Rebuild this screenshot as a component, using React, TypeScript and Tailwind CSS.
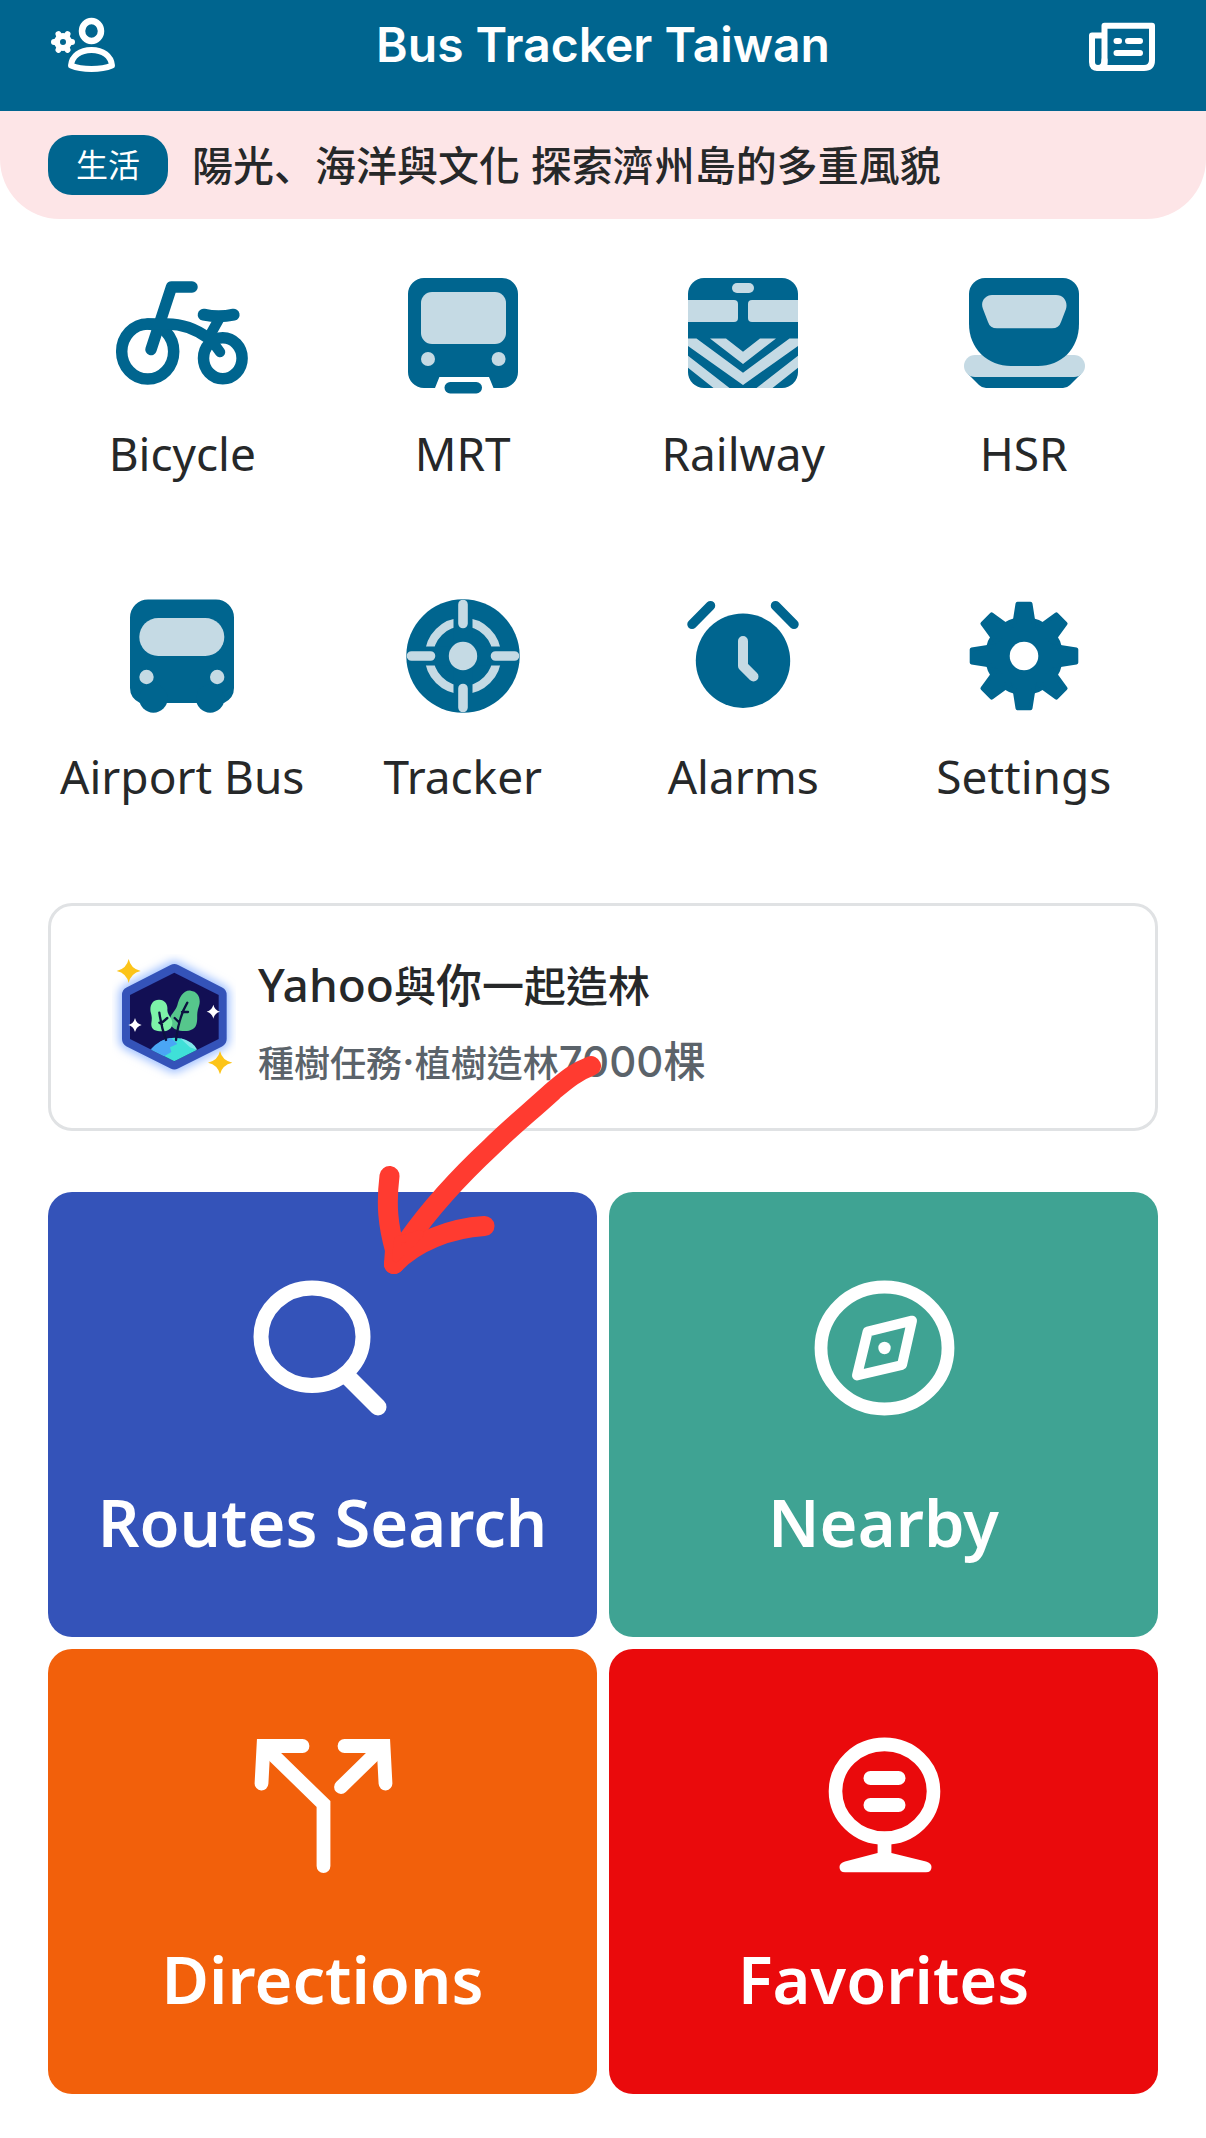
import type { ReactNode } from "react";

const LIGHT = "#c5dae4";

function AccountIcon() {
  return (
    <svg viewBox="48 14 70 62" className="h-[62px] w-[70px]" fill="none" stroke="white" aria-hidden="true">
      <ellipse cx="91.5" cy="31" rx="9.5" ry="10" strokeWidth="6.5" />
      <path
        d="M71 65.5C72 56 80 50 91.5 50S111 56 112 65.5C106 68 99 69 91.5 69S77 68 71 65.5Z"
        strokeWidth="6"
        strokeLinejoin="round"
      />
      <circle cx="63" cy="42" r="6" strokeWidth="6" />
      {[0, 60, 120, 180, 240, 300].map((deg) => (
        <path key={deg} d="M70 42H72" strokeWidth="6" strokeLinecap="round" transform={`rotate(${deg} 63 42)`} />
      ))}
    </svg>
  );
}

function NewsIcon() {
  return (
    <svg
      viewBox="1088 14 70 62"
      className="h-[62px] w-[70px]"
      fill="none"
      stroke="white"
      strokeWidth="6"
      strokeLinecap="round"
      strokeLinejoin="round"
      aria-hidden="true"
    >
      <path d="M1104.500 66V25.700H1152V60Q1152 68 1144 68H1098Q1092 68 1092 62V35.500H1103" />
      <path d="M1104.500 60Q1104.500 68 1098 68" />
      <path d="M1116.500 41H1119M1128 41H1140M1116.500 53H1140" />
    </svg>
  );
}

function ServiceSvg({ children }: { children: ReactNode }) {
  return (
    <svg viewBox="0 0 140 140" className="h-[140px] w-[140px]" fill="#00658f" aria-hidden="true">
      {children}
    </svg>
  );
}

function BicycleIcon() {
  return (
    <ServiceSvg>
      <g fill="none" stroke="#00658f" strokeWidth="11.5" strokeLinecap="round" strokeLinejoin="round">
        <ellipse cx="35.700" cy="88.500" rx="26" ry="27.600" />
        <ellipse cx="110.800" cy="95.200" rx="19.300" ry="20.500" />
        <path d="M80 24H59.500L39 86.500" />
        <path d="M36 61H52Q76 60 96 75" />
        <path d="M107 56L97 74L108 89" strokeWidth="10.500" />
        <path d="M91.700 51.700Q106.600 55 121.600 51.700" strokeWidth="12" />
      </g>
    </ServiceSvg>
  );
}

function MrtIcon() {
  return (
    <ServiceSvg>
      <path d="M31 15H109A16 16 0 0 1 125 31V109A16 16 0 0 1 109 125H100.500L96 114H46.400L42 125H31A16 16 0 0 1 15 109V31A16 16 0 0 1 31 15Z" />
      <rect x="28" y="29" width="85" height="52" rx="11" fill={LIGHT} />
      <circle cx="35" cy="96" r="7" fill={LIGHT} />
      <circle cx="105.600" cy="96" r="7" fill={LIGHT} />
      <rect x="51.500" y="119" width="37.500" height="11.500" rx="5.700" />
    </ServiceSvg>
  );
}

function RailwayIcon() {
  return (
    <ServiceSvg>
      <clipPath id="railway-body">
        <rect x="15" y="15" width="110" height="110" rx="16" />
      </clipPath>
      <g clipPath="url(#railway-body)">
        <rect x="15" y="15" width="110" height="110" />
        <g fill={LIGHT}>
          <rect x="59" y="20" width="22" height="10" rx="5" />
          <rect x="5" y="37" width="60" height="22" rx="4" />
          <rect x="75" y="37" width="60" height="22" rx="4" />
          <path d="M37 75.500H53L70 88.700L87 75.500H103L70 101Z" />
          <path d="M15 75.500H23.500L70 109.700L116.500 75.500H125V83L70 122L15 83Z" />
          <path d="M15 92.700L56.500 125H40.500L15 104.700ZM125 92.700L83.500 125H99.500L125 104.700Z" />
        </g>
      </g>
    </ServiceSvg>
  );
}

function HsrIcon() {
  return (
    <ServiceSvg>
      <path d="M14 111H127L116 122Q113 125 109 125H32Q28 125 25 122Z" />
      <rect x="10" y="92" width="121" height="22" rx="11" fill={LIGHT} />
      <path d="M31 15H109A16 16 0 0 1 125 31V61C125 86 107 103 84 103H57C34 103 15 86 15 61V31A16 16 0 0 1 31 15Z" />
      <path
        d="M38 32H102C110 32 114 39 112 46L107 59Q105 65.300 98 65.300H43Q36 65.300 34 59L29 46C26 39 31 32 38 32Z"
        fill={LIGHT}
      />
    </ServiceSvg>
  );
}

function AirportBusIcon() {
  return (
    <ServiceSvg>
      <path d="M36 13.500H104A18 18 0 0 1 122 31.500V102Q122 112 112 117H28Q18 112 18 102V31.500A18 18 0 0 1 36 13.500Z" />
      <circle cx="41.400" cy="112.500" r="14.200" />
      <circle cx="98.200" cy="112.500" r="14.200" />
      <rect x="27.300" y="32" width="85" height="38" rx="19" fill={LIGHT} />
      <circle cx="34.500" cy="91" r="7.200" fill={LIGHT} />
      <circle cx="105.200" cy="91" r="7.200" fill={LIGHT} />
    </ServiceSvg>
  );
}

function TrackerIcon() {
  return (
    <ServiceSvg>
      <circle cx="70" cy="70" r="56.700" />
      <circle cx="70" cy="70" r="34" fill="none" stroke={LIGHT} strokeWidth="8.500" />
      <path d="M70 30V110M30 70H110" stroke="#00658f" strokeWidth="19" />
      <path
        d="M70 18.500V37.500M70 102.500V121.500M18.500 70H37.500M102.500 70H121.500"
        stroke={LIGHT}
        strokeWidth="9.600"
        strokeLinecap="round"
      />
      <circle cx="70" cy="70" r="14.200" fill={LIGHT} />
    </ServiceSvg>
  );
}

function AlarmIcon() {
  return (
    <ServiceSvg>
      <circle cx="70" cy="74.700" r="47.200" />
      <g fill="none" strokeLinecap="round" strokeLinejoin="round">
        <path d="M19 38.300L37.500 19.700M121 38.300L102.500 19.700" stroke="#00658f" strokeWidth="9.500" />
        <path d="M70 55V80L80.500 90.500" stroke={LIGHT} strokeWidth="10" />
      </g>
    </ServiceSvg>
  );
}

function SettingsIcon() {
  return (
    <ServiceSvg>
      <circle cx="70" cy="70" r="39" />
      {[0, 45, 90, 135, 180, 225, 270, 315].map((deg) => (
        <path
          key={deg}
          d="M63.500 17.700H76.500L80 40H60Z"
          stroke="#00658f"
          strokeWidth="4"
          strokeLinejoin="round"
          transform={`rotate(${deg} 70 70)`}
        />
      ))}
      <circle cx="70" cy="70" r="14.300" fill="white" />
    </ServiceSvg>
  );
}

function TileSvg({ children }: { children: ReactNode }) {
  return (
    <svg
      viewBox="0 0 140 140"
      className="h-[140px] w-[140px] overflow-visible"
      fill="none"
      stroke="white"
      strokeLinecap="round"
      aria-hidden="true"
    >
      {children}
    </svg>
  );
}

function SearchIcon() {
  return (
    <TileSvg>
      <ellipse cx="59" cy="58.700" rx="51" ry="48.800" strokeWidth="15" />
      <path d="M96 100L125 129" strokeWidth="17" />
    </TileSvg>
  );
}

function NearbyIcon() {
  return (
    <TileSvg>
      <ellipse cx="70.500" cy="70" rx="63.500" ry="61" strokeWidth="12.800" />
      <path d="M98 42.700L53.600 53.700L43 97.500L88 87Z" strokeWidth="10" strokeLinejoin="round" />
      <circle cx="70.500" cy="70" r="6.200" fill="white" stroke="none" />
    </TileSvg>
  );
}

function DirectionsIcon() {
  return (
    <TileSvg>
      <g strokeWidth="13.800">
        <path d="M70.500 131V69L12 12" />
        <path d="M49.500 11H10.500L8.500 48.500" />
        <path d="M91.500 11H130.500L132.500 48.500" />
        <path d="M88 52L129 12" />
      </g>
    </TileSvg>
  );
}

function FavoritesIcon() {
  return (
    <TileSvg>
      <ellipse cx="70.500" cy="56.200" rx="49" ry="46.800" strokeWidth="13.600" />
      <g fill="white" stroke="none">
        <rect x="49.500" y="36" width="42" height="14" rx="7" />
        <rect x="49.500" y="63" width="42" height="14" rx="7" />
        <path d="M63.600 106H77.400V118L112 126.500Q117.500 128 117.500 132Q117.500 137.300 112 137.300H31Q25.500 137.300 25.500 132Q25.500 128 31 126.500L63.600 118Z" />
      </g>
    </TileSvg>
  );
}

function TreeBadge() {
  return (
    <svg viewBox="0 0 450 450" className="h-[150px] w-[150px] shrink-0" aria-hidden="true">
      <defs>
        <filter id="badge-glow" x="-20%" y="-20%" width="140%" height="140%">
          <feGaussianBlur stdDeviation="13" />
        </filter>
        <clipPath id="badge-inner">
          <path d="M223 98L356 165V297L223 364L90 297V165Z" />
        </clipPath>
      </defs>
      <path
        d="M223 97L355 165V297L223 363L91 297V165Z"
        fill="#a5c4ff"
        stroke="#a5c4ff"
        strokeWidth="70"
        strokeLinejoin="round"
        filter="url(#badge-glow)"
      />
      <path
        d="M223 97L355 165V297L223 363L91 297V165Z"
        fill="#3453b9"
        stroke="#3453b9"
        strokeWidth="50"
        strokeLinejoin="round"
      />
      <path d="M223 98L356 165V297L223 364L90 297V165Z" fill="#120f54" />
      <g clipPath="url(#badge-inner)">
        <circle cx="223" cy="372" r="79" fill="#3fe0d8" />
        <path d="M150 330Q180 296 214 294L232 312L210 322L214 336L190 350L160 340Z" fill="#4aa6f5" />
        <path d="M240 294Q280 304 292 330L270 322Z" fill="#7ee8ea" />
      </g>
      <path
        d="M272 152C294 154 304 176 297 198C288 222 294 232 290 250C286 272 262 276 240 272C222 270 208 258 210 238C212 222 226 214 232 196C238 172 250 150 272 152Z"
        fill="#56c68c"
      />
      <path
        d="M178 179C196 180 204 194 202 210C202 226 216 232 217 248C217 266 204 274 186 274C166 274 152 268 154 250C156 236 156 230 152 216C148 196 158 178 178 179Z"
        fill="#7df2a8"
      />
      <path
        d="M178 218Q184 262 198 300M188 246L202 234M186 254L178 248M262 188Q236 232 228 300M246 216L264 216M236 246L224 234"
        fill="none"
        stroke="#0c1240"
        strokeWidth="7"
        strokeLinecap="round"
      />
      <path d="M86 57Q92 86 122 93Q92 100 86 129Q80 100 50 93Q80 86 86 57Z" fill="#fcc419" />
      <path d="M360 333Q366 361 397 368Q366 375 360 403Q354 375 324 368Q354 361 360 333Z" fill="#fcc419" />
      <path d="M340 194Q344 211 360 215Q344 219 340 236Q336 219 320 215Q336 211 340 194Z" fill="white" />
      <path d="M105 234Q109 251 125 255Q109 259 105 276Q101 259 85 255Q101 251 105 234Z" fill="white" />
    </svg>
  );
}

// hand-drawn pointer towards the routes search tile
function RedArrow() {
  return (
    <svg
      viewBox="370 1050 240 230"
      className="pointer-events-none absolute left-[370px] top-[147px] h-[230px] w-[240px]"
      fill="none"
      stroke="#ff3b30"
      strokeWidth="20"
      strokeLinecap="round"
      strokeLinejoin="round"
      aria-hidden="true"
    >
      <path d="M591 1066C575 1072 565 1081 553 1091C530 1112 510 1128 491 1147C462 1174 432 1206 408 1240L394 1264" />
      <path d="M389.500 1176C386 1205 388 1225 395 1250L394 1264" />
      <path d="M484.500 1226C450 1228 415 1242 394 1264" />
      <path d="M398 1240L420 1234L396 1258Z" fill="#ff3b30" strokeWidth="8" />
    </svg>
  );
}

const services = [
  { name: "Bicycle", icon: <BicycleIcon /> },
  { name: "MRT", icon: <MrtIcon /> },
  { name: "Railway", icon: <RailwayIcon /> },
  { name: "HSR", icon: <HsrIcon /> },
  { name: "Airport Bus", icon: <AirportBusIcon /> },
  { name: "Tracker", icon: <TrackerIcon /> },
  { name: "Alarms", icon: <AlarmIcon /> },
  { name: "Settings", icon: <SettingsIcon /> },
];

const tiles = [
  { name: "Routes Search", bg: "bg-[#3453b9]", icon: <SearchIcon /> },
  { name: "Nearby", bg: "bg-[#3fa393]", icon: <NearbyIcon /> },
  { name: "Directions", bg: "bg-[#f2600b]", icon: <DirectionsIcon /> },
  { name: "Favorites", bg: "bg-[#ea0a0c]", icon: <FavoritesIcon /> },
];

export default function App() {
  return (
    <div className="bg-white pb-11 font-['Noto_Sans','Noto_Sans_CJK_TC',sans-serif] text-[#262829]">
      <header className="flex items-center justify-between bg-[#00658f] px-12 pb-[35px] pt-3.5 text-white">
        <button type="button" aria-label="Account">
          <AccountIcon />
        </button>
        <h1 className="font-['Inter',sans-serif] text-[48px] font-semibold leading-[62px]">Bus Tracker Taiwan</h1>
        <button type="button" aria-label="News">
          <NewsIcon />
        </button>
      </header>

      <a href="#news" className="flex items-center gap-6 rounded-b-[60px] bg-[#fde5e7] px-12 py-6">
        <span className="w-[120px] rounded-3xl bg-[#00658f] text-center text-[32px] leading-[60px] text-white">
          生活
        </span>
        <span className="text-[41px] font-medium leading-[60px]">
          陽光
          <span lang="ja" className="font-['Noto_Sans','Noto_Sans_CJK_JP',sans-serif]">
            、
          </span>
          海洋與文化 探索濟州島的多重風貌
        </span>
      </a>

      <nav className="grid grid-cols-4 gap-y-[101px] px-[42px] pt-11">
        {services.map((s) => (
          <button key={s.name} type="button" className="flex flex-col items-center gap-[18px]">
            {s.icon}
            <span className="whitespace-nowrap text-[46px] leading-[64px]">{s.name}</span>
          </button>
        ))}
      </nav>

      <main className="relative mt-[95px] px-12">
        <a
          href="#forest"
          className="flex h-[228px] items-start gap-2 rounded-3xl border-[3px] border-[#e0e2e4] pl-[49px] pt-[34px]"
        >
          <TreeBadge />
          <div className="pt-1.5">
            <p className="text-[42px] font-medium leading-[76px]">
              <span className="text-[46px]">Yahoo</span>與<span className="text-[46px]">你</span>一起造林
            </p>
            <p className="text-[36px] font-medium leading-[76px] text-[#5b636a]">
              種樹任務<span className="font-['Inter',sans-serif] text-[42px]">·</span>植樹造林
              <span className="font-['Inter','Noto_Sans_CJK_TC',sans-serif] text-[42px]">7000棵</span>
            </p>
          </div>
        </a>

        <div className="mt-[61px] grid grid-cols-2 gap-3">
          {tiles.map((t) => (
            <button
              key={t.name}
              type="button"
              className={`flex h-[445px] flex-col items-center gap-[60px] rounded-3xl pt-[86px] text-white ${t.bg}`}
            >
              {t.icon}
              <span className="text-[65px] font-semibold leading-[88px]">{t.name}</span>
            </button>
          ))}
        </div>

        <RedArrow />
      </main>
    </div>
  );
}
